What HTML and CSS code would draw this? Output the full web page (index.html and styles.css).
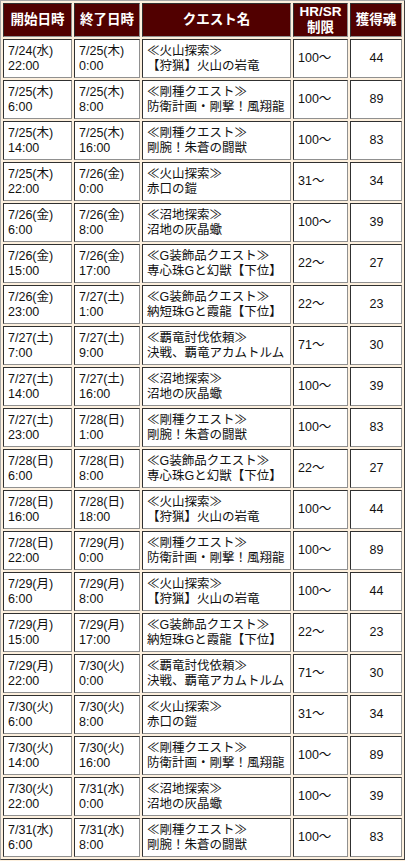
FILE: index.html
```html
<!DOCTYPE html>
<html lang="ja">
<head>
<meta charset="utf-8">
<title>クエスト一覧</title>
<link rel="stylesheet" href="styles.css">
</head>
<body>
<table class="quests">
<thead>
<tr>
<th class="c1">開始日時</th>
<th class="c2">終了日時</th>
<th class="c3">クエスト名</th>
<th class="c4">HR/SR<br>制限</th>
<th class="c5">獲得魂</th>
</tr>
</thead>
<tbody>
<tr><td>7/24(水)<br>22:00</td><td>7/25(木)<br>0:00</td><td>≪火山探索≫<br>【狩猟】火山の岩竜</td><td>100〜</td><td class="num">44</td></tr>
<tr><td>7/25(木)<br>6:00</td><td>7/25(木)<br>8:00</td><td>≪剛種クエスト≫<br>防衛計画・剛撃！風翔龍</td><td>100〜</td><td class="num">89</td></tr>
<tr><td>7/25(木)<br>14:00</td><td>7/25(木)<br>16:00</td><td>≪剛種クエスト≫<br>剛腕！朱蒼の闘獣</td><td>100〜</td><td class="num">83</td></tr>
<tr><td>7/25(木)<br>22:00</td><td>7/26(金)<br>0:00</td><td>≪火山探索≫<br>赤口の鎧</td><td>31〜</td><td class="num">34</td></tr>
<tr><td>7/26(金)<br>6:00</td><td>7/26(金)<br>8:00</td><td>≪沼地探索≫<br>沼地の灰晶蠍</td><td>100〜</td><td class="num">39</td></tr>
<tr><td>7/26(金)<br>15:00</td><td>7/26(金)<br>17:00</td><td>≪G装飾品クエスト≫<br>専心珠Gと幻獣【下位】</td><td>22〜</td><td class="num">27</td></tr>
<tr><td>7/26(金)<br>23:00</td><td>7/27(土)<br>1:00</td><td>≪G装飾品クエスト≫<br>納短珠Gと霞龍【下位】</td><td>22〜</td><td class="num">23</td></tr>
<tr><td>7/27(土)<br>7:00</td><td>7/27(土)<br>9:00</td><td>≪覇竜討伐依頼≫<br>決戦、覇竜アカムトルム</td><td>71〜</td><td class="num">30</td></tr>
<tr><td>7/27(土)<br>14:00</td><td>7/27(土)<br>16:00</td><td>≪沼地探索≫<br>沼地の灰晶蠍</td><td>100〜</td><td class="num">39</td></tr>
<tr><td>7/27(土)<br>23:00</td><td>7/28(日)<br>1:00</td><td>≪剛種クエスト≫<br>剛腕！朱蒼の闘獣</td><td>100〜</td><td class="num">83</td></tr>
<tr><td>7/28(日)<br>6:00</td><td>7/28(日)<br>8:00</td><td>≪G装飾品クエスト≫<br>専心珠Gと幻獣【下位】</td><td>22〜</td><td class="num">27</td></tr>
<tr><td>7/28(日)<br>16:00</td><td>7/28(日)<br>18:00</td><td>≪火山探索≫<br>【狩猟】火山の岩竜</td><td>100〜</td><td class="num">44</td></tr>
<tr><td>7/28(日)<br>22:00</td><td>7/29(月)<br>0:00</td><td>≪剛種クエスト≫<br>防衛計画・剛撃！風翔龍</td><td>100〜</td><td class="num">89</td></tr>
<tr><td>7/29(月)<br>6:00</td><td>7/29(月)<br>8:00</td><td>≪火山探索≫<br>【狩猟】火山の岩竜</td><td>100〜</td><td class="num">44</td></tr>
<tr><td>7/29(月)<br>15:00</td><td>7/29(月)<br>17:00</td><td>≪G装飾品クエスト≫<br>納短珠Gと霞龍【下位】</td><td>22〜</td><td class="num">23</td></tr>
<tr><td>7/29(月)<br>22:00</td><td>7/30(火)<br>0:00</td><td>≪覇竜討伐依頼≫<br>決戦、覇竜アカムトルム</td><td>71〜</td><td class="num">30</td></tr>
<tr><td>7/30(火)<br>6:00</td><td>7/30(火)<br>8:00</td><td>≪火山探索≫<br>赤口の鎧</td><td>31〜</td><td class="num">34</td></tr>
<tr><td>7/30(火)<br>14:00</td><td>7/30(火)<br>16:00</td><td>≪剛種クエスト≫<br>防衛計画・剛撃！風翔龍</td><td>100〜</td><td class="num">89</td></tr>
<tr><td>7/30(火)<br>22:00</td><td>7/31(水)<br>0:00</td><td>≪沼地探索≫<br>沼地の灰晶蠍</td><td>100〜</td><td class="num">39</td></tr>
<tr><td>7/31(水)<br>6:00</td><td>7/31(水)<br>8:00</td><td>≪剛種クエスト≫<br>剛腕！朱蒼の闘獣</td><td>100〜</td><td class="num">83</td></tr>
</tbody>
</table>
</body>
</html>
```

FILE: styles.css
```css
html, body {
  margin: 0;
  padding: 0;
  background: #fdf0de;
}

body {
  font-family: "Liberation Sans", "Noto Sans CJK JP", sans-serif;
  color: #111;
}

.quests {
  width: 405px;
  table-layout: fixed;
  border-collapse: separate;
  border-spacing: 2px;
  border: 1px solid;
  border-color: #a8a8a8 #404040 #404040 #a8a8a8;
}

.quests th,
.quests td {
  box-sizing: border-box;
  border: 1px solid;
  border-color: #303030 #909090 #909090 #303030;
}

.quests th {
  background: #510000;
  color: #fff;
  font-weight: bold;
  font-size: 13.5px;
  line-height: 16px;
  height: 34px;
  padding: 0;
  text-align: center;
  vertical-align: middle;
}

.quests .c1 { width: 69px; }
.quests .c2 { width: 66px; }
.quests .c3 { width: 149px; }
.quests .c4 { width: 55px; }

.quests td {
  background: #fff;
  font-size: 12.5px;
  line-height: 15px;
  height: 39px;
  padding: 0 3px 0 4px;
  text-align: left;
  vertical-align: middle;
  white-space: nowrap;
  overflow: hidden;
}

.quests td.num {
  text-align: center;
}
```
